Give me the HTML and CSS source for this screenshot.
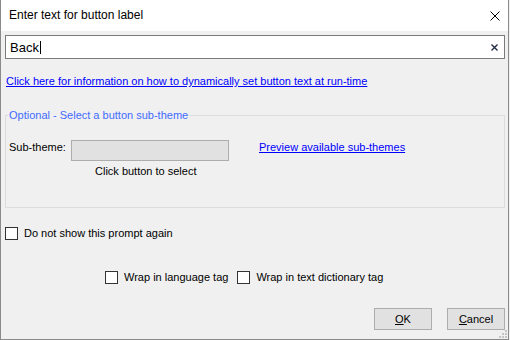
FILE: index.html
```html
<!DOCTYPE html>
<html lang="en">
<head>
    <meta charset="UTF-8">
    <meta name="viewport" content="width=device-width, initial-scale=1.0">
    <title>Enter text for button label</title>
<link rel="stylesheet" href="styles.css">
</head>

<body>
    <div class="window">
        <div class="titlebar">
            <span class="title">Enter text for button label</span>
            <svg class="close" width="10" height="10" viewBox="0 0 10 10">
                <path d="M0.5 0.5 L9.5 9.5 M9.5 0.5 L0.5 9.5" stroke="#000" stroke-width="1" fill="none"/>
            </svg>
        </div>

        <div class="content">
            <div class="textbox">
                <span class="value">Back</span><span class="caret"></span>
                <svg class="clear" width="7" height="7" viewBox="0 0 7 7">
                    <path d="M0.5 0.5 L6.5 6.5 M6.5 0.5 L0.5 6.5" stroke="#1f2a44" stroke-width="1.3" fill="none"/>
                </svg>
            </div>

            <div class="info">
                <a href="#" class="link">Click here for information on how to dynamically set button text at run-time</a>
            </div>

            <fieldset class="group">
                <legend>Optional - Select a button sub-theme</legend>
                <div class="subtheme-row">
                    <span class="label">Sub-theme:</span>
                    <div class="picker-col">
                        <div class="picker"></div>
                        <div class="hint">Click button to select</div>
                    </div>
                    <a href="#" class="link preview">Preview available sub-themes</a>
                </div>
            </fieldset>

            <label class="check">
                <span class="box"></span>
                <span>Do not show this prompt again</span>
            </label>

            <div class="wrap-row">
                <label class="check">
                    <span class="box"></span>
                    <span>Wrap in language tag</span>
                </label>
                <label class="check">
                    <span class="box"></span>
                    <span>Wrap in text dictionary tag</span>
                </label>
            </div>

            <div class="buttons">
                <button class="btn"><u>O</u>K</button>
                <button class="btn"><u>C</u>ancel</button>
            </div>
        </div>

        <svg class="grip" width="8" height="8" viewBox="0 0 8 8">
            <rect x="6" y="0" width="2" height="2" fill="#c4c4c4"/>
            <rect x="3" y="3" width="2" height="2" fill="#c4c4c4"/>
            <rect x="6" y="3" width="2" height="2" fill="#c4c4c4"/>
            <rect x="0" y="6" width="2" height="2" fill="#c4c4c4"/>
            <rect x="3" y="6" width="2" height="2" fill="#c4c4c4"/>
            <rect x="6" y="6" width="2" height="2" fill="#c4c4c4"/>
        </svg>
    </div>
</body>
</html>
```

FILE: styles.css
```css
body {
    margin: 0;
    font-family: "Liberation Sans", Arial, sans-serif;
    font-size: 11px;
    line-height: 15px;
    color: #000;
    background-color: #f0f0f0;
}

.window {
    position: relative;
    width: 509px;
    height: 340px;
    box-sizing: border-box;
    border: 1px solid #8a8a8a;
    border-top: none;
    background-color: #f0f0f0;
}

.titlebar {
    display: flex;
    align-items: center;
    height: 31px;
    padding: 0 8px 0 8px;
    font-size: 12px;
    background-color: #fff;
}

.close {
    margin-left: auto;
}

.content {
    padding: 4px 3px 0 4px;
}

.textbox {
    display: flex;
    align-items: center;
    height: 24px;
    box-sizing: border-box;
    border: 1px solid #7a7a7a;
    background-color: #fff;
    padding: 0 6px 0 4px;
    font-size: 13px;
}

.caret {
    width: 1px;
    height: 13px;
    margin-left: 1px;
    background-color: #000;
}

.clear {
    margin-left: auto;
}

.info {
    margin-top: 15px;
    padding-left: 1px;
}

.link {
    color: #0000ff;
    text-decoration: underline;
}

.group {
    margin: 19px 0 0 0;
    padding: 0 0 28px 2px;
    border: 1px solid #dcdcdc;
}

.group legend {
    padding: 0 1px;
    color: #3f6bff;
}

.subtheme-row {
    display: flex;
    align-items: flex-start;
    padding: 17px 0 0 1px;
}

.label {
    width: 62px;
    white-space: nowrap;
}

.picker {
    width: 158px;
    height: 21px;
    box-sizing: border-box;
    border: 1px solid #adadad;
    background-color: #e1e1e1;
}

.hint {
    margin-top: 3px;
    padding-left: 24px;
}

.preview {
    margin-left: 30px;
}

.check {
    display: flex;
    align-items: center;
    gap: 6px;
}

.box {
    width: 13px;
    height: 13px;
    box-sizing: border-box;
    border: 1px solid #333;
    background-color: #fff;
}

.content > .check {
    margin-top: 18px;
}

.wrap-row {
    display: flex;
    gap: 9px;
    margin-top: 29px;
    padding-left: 100px;
}

.buttons {
    display: flex;
    justify-content: flex-end;
    gap: 15px;
    margin-top: 23px;
}

.btn {
    width: 58px;
    height: 22px;
    padding: 0;
    font-family: inherit;
    font-size: 11px;
    color: #000;
    border: 1px solid #adadad;
    background-color: #e1e1e1;
}

.grip {
    position: absolute;
    right: 1px;
    bottom: 1px;
}
```
